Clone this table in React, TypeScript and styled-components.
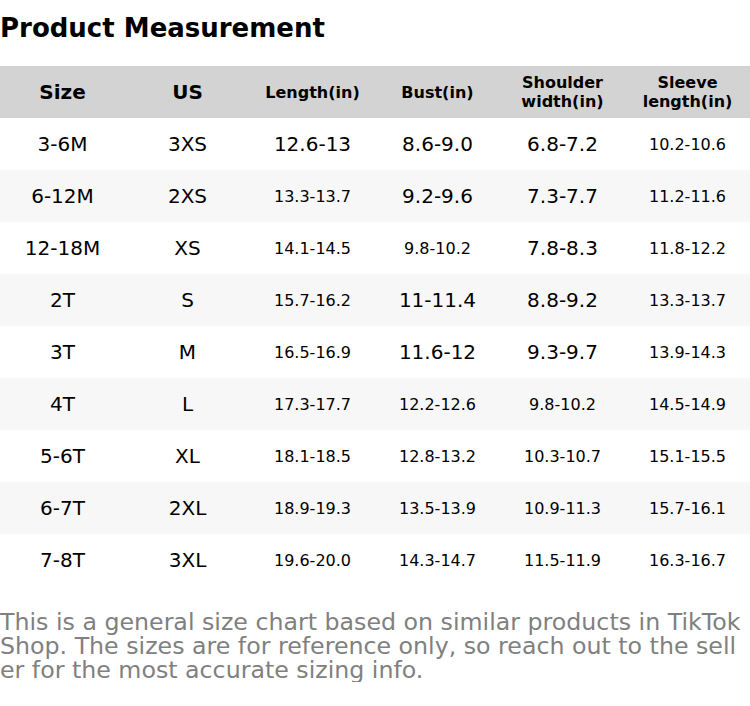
import React from "react";
import styled, { createGlobalStyle } from "styled-components";

const Global = createGlobalStyle`
  html, body { margin: 0; padding: 0; background: #fff; }
  body { font-family: "DejaVu Sans", Verdana, sans-serif; color: #000; }
`;

const Page = styled.div`
  width: 750px;
`;

const Title = styled.h1`
  margin: 0;
  padding: 13px 0 23px;
  font-size: 26px;
  line-height: 30px;
  font-weight: bold;
`;

const Table = styled.div`
  display: grid;
  grid-template-columns: repeat(6, 1fr);
`;

const HeaderCell = styled.div<{ $big: boolean }>`
  height: 52px;
  background: #d3d3d3;
  display: flex;
  align-items: center;
  justify-content: center;
  text-align: center;
  font-weight: bold;
  font-size: ${(p) => (p.$big ? "20px" : "16px")};
  line-height: 19px;
`;

const Cell = styled.div<{ $alt: boolean; $small: boolean }>`
  height: 52px;
  background: ${(p) => (p.$alt ? "#f7f7f7" : "#ffffff")};
  display: flex;
  align-items: center;
  justify-content: center;
  font-size: ${(p) => (p.$small ? "16px" : "20px")};
`;

const Note = styled.p`
  margin: 24px 0 0;
  font-size: 23.7px;
  line-height: 24px;
  color: #808080;
  word-break: break-all;
`;

const headers = ["Size", "US", "Length(in)", "Bust(in)", "Shoulder width(in)", "Sleeve length(in)"];

const rows = [
  ["3-6M", "3XS", "12.6-13", "8.6-9.0", "6.8-7.2", "10.2-10.6"],
  ["6-12M", "2XS", "13.3-13.7", "9.2-9.6", "7.3-7.7", "11.2-11.6"],
  ["12-18M", "XS", "14.1-14.5", "9.8-10.2", "7.8-8.3", "11.8-12.2"],
  ["2T", "S", "15.7-16.2", "11-11.4", "8.8-9.2", "13.3-13.7"],
  ["3T", "M", "16.5-16.9", "11.6-12", "9.3-9.7", "13.9-14.3"],
  ["4T", "L", "17.3-17.7", "12.2-12.6", "9.8-10.2", "14.5-14.9"],
  ["5-6T", "XL", "18.1-18.5", "12.8-13.2", "10.3-10.7", "15.1-15.5"],
  ["6-7T", "2XL", "18.9-19.3", "13.5-13.9", "10.9-11.3", "15.7-16.1"],
  ["7-8T", "3XL", "19.6-20.0", "14.3-14.7", "11.5-11.9", "16.3-16.7"],
];

export default function App() {
  return (
    <Page>
      <Global />
      <Title>Product Measurement</Title>
      <Table>
        {headers.map((h) => (
          <HeaderCell key={h} $big={h.length <= 4}>
            {h.includes(" ") ? (
              <span>
                {h.split(" ")[0]}
                <br />
                {h.split(" ")[1]}
              </span>
            ) : (
              h
            )}
          </HeaderCell>
        ))}
        {rows.map((r, i) =>
          r.map((c, j) => (
            <Cell key={`${i}-${j}`} $alt={i % 2 === 1} $small={c.length > 7}>
              {c}
            </Cell>
          ))
        )}
      </Table>
      <Note>
        This is a general size chart based on similar products in TikTok Shop. The sizes are for reference only, so reach out to the seller for the most accurate sizing info.
      </Note>
    </Page>
  );
}
